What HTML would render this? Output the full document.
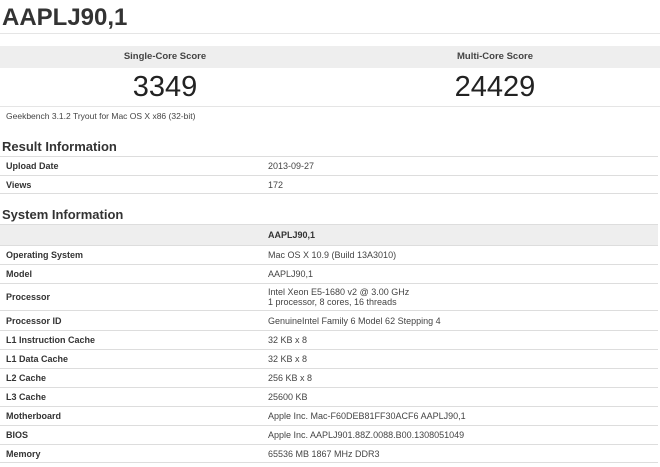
<!DOCTYPE html>
<html><head><style>
body{margin:0;width:660px;height:467px;background:#fff;font-family:"Liberation Sans",Arial,sans-serif;color:#333;position:relative;overflow:hidden}
.a{position:absolute}
h1{position:absolute;left:2px;top:4px;margin:0;font-size:24px;font-weight:bold;color:#333}
.line{position:absolute;left:0;width:660px;height:1px;background:#e5e5e5}
h2{position:absolute;left:2px;margin:0;font-size:13px;font-weight:bold;color:#333}
.row{position:absolute;left:0;width:658px;border-top:1px solid #ddd;font-size:9px;box-sizing:border-box}
.row .l{position:absolute;left:6px;font-weight:bold;color:#333}
.row .v{position:absolute;left:268px;color:#444;line-height:11px}
</style></head><body>
<h1>AAPLJ90,1</h1>
<div class="line" style="top:33px"></div>
<div class="a" style="left:0;top:46px;width:660px;height:22px;background:#eee"></div>
<div class="a" style="left:0;top:46px;width:330px;height:22px;line-height:22px;text-align:center;font-size:9.5px;font-weight:bold;color:#444">Single-Core Score</div>
<div class="a" style="left:330px;top:46px;width:330px;height:22px;line-height:22px;text-align:center;font-size:9.5px;font-weight:bold;color:#444">Multi-Core Score</div>
<div class="a" style="left:0;top:71px;width:330px;text-align:center;font-size:29px;color:#222">3349</div>
<div class="a" style="left:330px;top:71px;width:330px;text-align:center;font-size:29px;color:#222">24429</div>
<div class="line" style="top:106px"></div>
<div class="a" style="left:6px;top:111px;font-size:8.5px;color:#444">Geekbench 3.1.2 Tryout for Mac OS X x86 (32-bit)</div>
<h2 style="top:139px">Result Information</h2>
<div class="row" style="top:156px;height:19px"><span class="l" style="top:4px">Upload Date</span><span class="v" style="top:4px">2013-09-27</span></div>
<div class="row" style="top:175px;height:19px;border-bottom:1px solid #ddd"><span class="l" style="top:4px">Views</span><span class="v" style="top:4px">172</span></div>
<h2 style="top:207px">System Information</h2>
<div class="row" style="top:224px;height:21px;background:#eee"><span class="v" style="top:5px;font-weight:bold;color:#333">AAPLJ90,1</span></div>
<div class="row" style="top:245px;height:19px"><span class="l" style="top:4px">Operating System</span><span class="v" style="top:4px">Mac OS X 10.9 (Build 13A3010)</span></div>
<div class="row" style="top:264px;height:19px"><span class="l" style="top:4px">Model</span><span class="v" style="top:4px">AAPLJ90,1</span></div>
<div class="row" style="top:283px;height:27px"><span class="l" style="top:8px">Processor</span><span class="v" style="top:3px;line-height:10px">Intel Xeon E5-1680 v2 @ 3.00 GHz<br>1 processor, 8 cores, 16 threads</span></div>
<div class="row" style="top:310px;height:20px"><span class="l" style="top:5px">Processor ID</span><span class="v" style="top:5px">GenuineIntel Family 6 Model 62 Stepping 4</span></div>
<div class="row" style="top:330px;height:19px"><span class="l" style="top:4px">L1 Instruction Cache</span><span class="v" style="top:4px">32 KB x 8</span></div>
<div class="row" style="top:349px;height:19px"><span class="l" style="top:4px">L1 Data Cache</span><span class="v" style="top:4px">32 KB x 8</span></div>
<div class="row" style="top:368px;height:19px"><span class="l" style="top:4px">L2 Cache</span><span class="v" style="top:4px">256 KB x 8</span></div>
<div class="row" style="top:387px;height:19px"><span class="l" style="top:4px">L3 Cache</span><span class="v" style="top:4px">25600 KB</span></div>
<div class="row" style="top:406px;height:19px"><span class="l" style="top:4px">Motherboard</span><span class="v" style="top:4px">Apple Inc. Mac-F60DEB81FF30ACF6 AAPLJ90,1</span></div>
<div class="row" style="top:425px;height:19px"><span class="l" style="top:4px">BIOS</span><span class="v" style="top:4px">Apple Inc. AAPLJ901.88Z.0088.B00.1308051049</span></div>
<div class="row" style="top:444px;height:19px;border-bottom:1px solid #ddd"><span class="l" style="top:4px">Memory</span><span class="v" style="top:4px">65536 MB 1867 MHz DDR3</span></div>
</body></html>
